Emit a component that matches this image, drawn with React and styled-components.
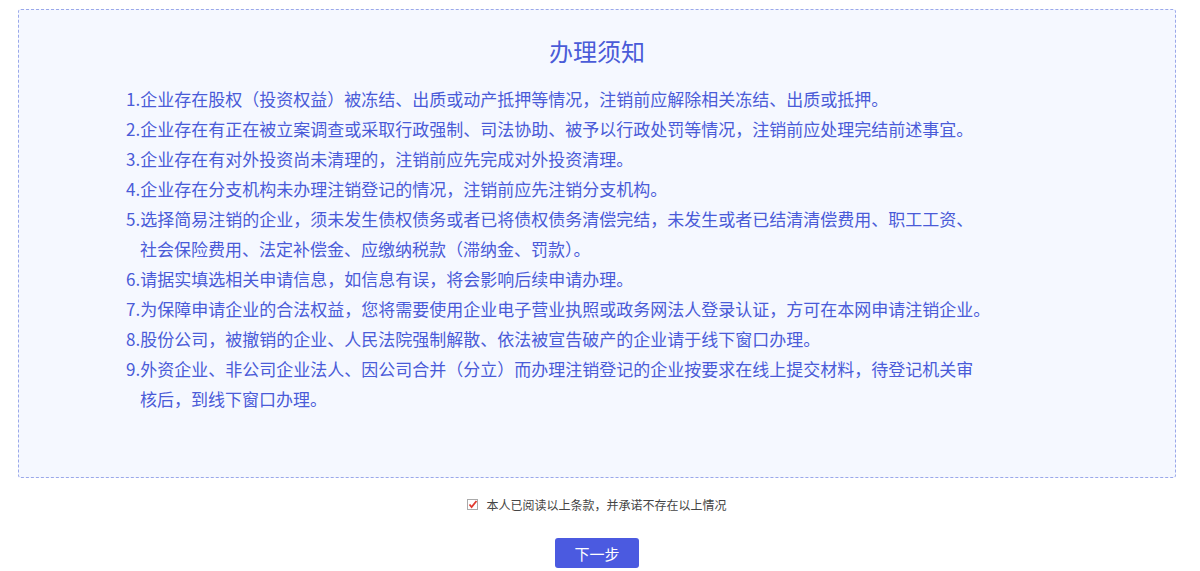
import styled, { createGlobalStyle } from "styled-components";

const items = [
    "1.企业存在股权（投资权益）被冻结、出质或动产抵押等情况，注销前应解除相关冻结、出质或抵押。",
    "2.企业存在有正在被立案调查或采取行政强制、司法协助、被予以行政处罚等情况，注销前应处理完结前述事宜。",
    "3.企业存在有对外投资尚未清理的，注销前应先完成对外投资清理。",
    "4.企业存在分支机构未办理注销登记的情况，注销前应先注销分支机构。",
    ["5.选择简易注销的企业，须未发生债权债务或者已将债权债务清偿完结，未发生或者已结清清偿费用、职工工资、", "社会保险费用、法定补偿金、应缴纳税款（滞纳金、罚款）。"],
    "6.请据实填选相关申请信息，如信息有误，将会影响后续申请办理。",
    "7.为保障申请企业的合法权益，您将需要使用企业电子营业执照或政务网法人登录认证，方可在本网申请注销企业。",
    "8.股份公司，被撤销的企业、人民法院强制解散、依法被宣告破产的企业请于线下窗口办理。",
    ["9.外资企业、非公司企业法人、因公司合并（分立）而办理注销登记的企业按要求在线上提交材料，待登记机关审", "核后，到线下窗口办理。"],
];

const App = () => (
    <>
        <GlobalStyle />
        <Page>
            <Notice>
                <Title>办理须知</Title>
                <List>
                    {items.map((it, i) =>
                        Array.isArray(it) ? (
                            <Item key={i}>
                                {it[0]}
                                <br />
                                <Indent>{it[1]}</Indent>
                            </Item>
                        ) : (
                            <Item key={i}>{it}</Item>
                        )
                    )}
                </List>
            </Notice>
            <Agree>
                <CheckBox>
                    <svg width="11" height="11" viewBox="0 0 11 11">
                        <rect x="0.5" y="0.5" width="10" height="10" fill="#fff" stroke="#aaa" />
                        <path d="M2.5 5.5 L4.6 8 L9.5 2" fill="none" stroke="#e03a2f" strokeWidth="1.8" />
                    </svg>
                </CheckBox>
                本人已阅读以上条款，并承诺不存在以上情况
            </Agree>
            <NextButton>下一步</NextButton>
        </Page>
    </>
);

export default App;

const GlobalStyle = createGlobalStyle`
    body {
        margin: 0;
        background: #ffffff;
        font-family: "Microsoft YaHei", "Noto Sans CJK SC", sans-serif;
    }
`;

const Page = styled.div`
    padding: 9px 24px 0 18px;
    display: flex;
    flex-direction: column;
    align-items: center;
`;

const Notice = styled.div`
    box-sizing: border-box;
    width: 1158px;
    height: 469px;
    align-self: flex-start;
    background: #f5f8ff;
    border: 1px dashed #9aa8ea;
    border-radius: 3px;
    padding: 24px 0 0 107px;
`;

const Title = styled.div`
    text-align: center;
    margin-left: -107px;
    font-size: 24px;
    line-height: 34px;
    color: #4a5bd8;
`;

const List = styled.div`
    margin-top: 16px;
`;

const Item = styled.div`
    font-size: 17px;
    line-height: 30px;
    color: #4a5bd8;
    white-space: nowrap;
`;

const Indent = styled.span`
    padding-left: 14px;
`;

const Agree = styled.label`
    margin-top: 18px;
    display: flex;
    align-items: center;
    gap: 8px;
    font-size: 12px;
    color: #444;
`;

const CheckBox = styled.span`
    display: inline-flex;
`;

const NextButton = styled.button`
    margin-top: 25px;
    width: 84px;
    height: 30px;
    border: none;
    border-radius: 3px;
    background: #4b5ae0;
    color: #fff;
    font-family: inherit;
    font-size: 15px;
`;
